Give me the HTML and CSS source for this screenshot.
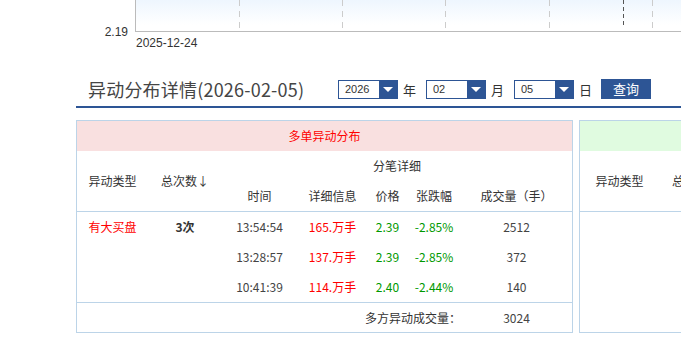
FILE: index.html
```html
<!DOCTYPE html>
<html lang="zh-CN">
<head>
<meta charset="utf-8">
<title>异动分布详情</title>
<link rel="stylesheet" href="styles.css">
</head>
<body>
<div class="page">
  <svg class="chart" width="681" height="50" viewBox="0 0 681 50" xmlns="http://www.w3.org/2000/svg">
    <defs>
      <linearGradient id="bg" x1="0" y1="0" x2="0" y2="1">
        <stop offset="0" stop-color="#eef6fe"/>
        <stop offset="0.8" stop-color="#ffffff"/>
      </linearGradient>
    </defs>
    <rect x="136" y="0" width="545" height="31" fill="url(#bg)"/>
    <g stroke="#cccccc" stroke-width="1" stroke-dasharray="6 5">
      <line x1="239.5" y1="0" x2="239.5" y2="30"/>
      <line x1="342.5" y1="0" x2="342.5" y2="30"/>
      <line x1="445.5" y1="0" x2="445.5" y2="30"/>
      <line x1="549.5" y1="0" x2="549.5" y2="30"/>
      <line x1="652.5" y1="0" x2="652.5" y2="30"/>
    </g>
    <line x1="623.5" y1="0" x2="623.5" y2="28" stroke="#555" stroke-width="1" stroke-dasharray="4 3"/>
    <line x1="135.5" y1="0" x2="135.5" y2="32" stroke="#bbbbbb"/>
    <line x1="135" y1="31.5" x2="681" y2="31.5" stroke="#bbbbbb"/>
    <text x="128" y="36" text-anchor="end" class="axis-text">2.19</text>
    <text x="136" y="47" class="axis-text">2025-12-24</text>
  </svg>

  <div class="title-bar">
    <h2 class="title">异动分布详情(2026-02-05)</h2>
    <div class="sel"><span class="sel-val">2026</span><span class="sel-btn"><i class="tri"></i></span></div>
    <span class="lbl">年</span>
    <div class="sel"><span class="sel-val">02</span><span class="sel-btn"><i class="tri"></i></span></div>
    <span class="lbl">月</span>
    <div class="sel"><span class="sel-val">05</span><span class="sel-btn"><i class="tri"></i></span></div>
    <span class="lbl lbl-last">日</span>
    <button class="query">查询</button>
  </div>

  <div class="panels">
    <div class="panel">
      <div class="panel-head head-red">多单异动分布</div>
      <table class="grid">
        <colgroup>
          <col style="width:71px"><col style="width:74px"><col style="width:75px"><col style="width:71px"><col style="width:39px"><col style="width:54px"><col style="width:111px">
        </colgroup>
        <thead>
          <tr>
            <th rowspan="2" class="bb">异动类型</th>
            <th rowspan="2" class="bb">总次数↓</th>
            <th colspan="5" class="sub">分笔详细</th>
          </tr>
          <tr class="h2">
            <th class="bb">时间</th>
            <th class="bb">详细信息</th>
            <th class="bb">价格</th>
            <th class="bb">张跌幅</th>
            <th class="bb">成交量（手）</th>
          </tr>
        </thead>
        <tbody>
          <tr>
            <td class="red">有大买盘</td>
            <td class="cnt">3次</td>
            <td>13:54:54</td>
            <td class="red">165.万手</td>
            <td class="green">2.39</td>
            <td class="green">-2.85%</td>
            <td>2512</td>
          </tr>
          <tr>
            <td></td>
            <td></td>
            <td>13:28:57</td>
            <td class="red">137.万手</td>
            <td class="green">2.39</td>
            <td class="green">-2.85%</td>
            <td>372</td>
          </tr>
          <tr class="last">
            <td></td>
            <td></td>
            <td>10:41:39</td>
            <td class="red">114.万手</td>
            <td class="green">2.40</td>
            <td class="green">-2.44%</td>
            <td>140</td>
          </tr>
        </tbody>
        <tfoot>
          <tr>
            <td colspan="6" class="sum-label">多方异动成交量：</td>
            <td>3024</td>
          </tr>
        </tfoot>
      </table>
    </div>

    <div class="panel panel-2">
      <div class="panel-head head-green">空单异动分布</div>
      <table class="grid">
        <colgroup>
          <col style="width:79px"><col style="width:74px"><col style="width:75px"><col style="width:71px"><col style="width:39px"><col style="width:54px"><col style="width:103px">
        </colgroup>
        <thead>
          <tr>
            <th rowspan="2" class="bb">异动类型</th>
            <th rowspan="2" class="bb">总次数↓</th>
            <th colspan="5" class="sub">分笔详细</th>
          </tr>
          <tr class="h2">
            <th class="bb">时间</th>
            <th class="bb">详细信息</th>
            <th class="bb">价格</th>
            <th class="bb">张跌幅</th>
            <th class="bb">成交量（手）</th>
          </tr>
        </thead>
        <tbody></tbody>
      </table>
    </div>
  </div>
</div>
</body>
</html>
```

FILE: styles.css
```css
html, body {
  margin: 0;
  padding: 0;
  background: #ffffff;
}
body {
  width: 681px;
  height: 341px;
  overflow: hidden;
  font-family: "Noto Sans CJK SC", "Liberation Sans", sans-serif;
  color: #333;
}
.page {
  width: 681px;
}
.chart {
  display: block;
}
.axis-text {
  font-family: "Liberation Sans", Arial, sans-serif;
  font-size: 12px;
  fill: #333;
}

/* Title bar */
.title-bar {
  margin: 22px 0 0 76px;
  height: 34px;
  border-bottom: 2px solid #2d5595;
  display: flex;
  align-items: center;
  padding-left: 12px;
  width: 700px;
  box-sizing: content-box;
}
.title {
  margin: 0;
  width: 250px;
  flex: none;
  font-size: 18px;
  font-weight: normal;
  line-height: 20px;
  color: #454545;
  white-space: nowrap;
  letter-spacing: 0.2px;
}
.sel {
  flex: none;
  width: 60px;
  height: 19px;
  box-sizing: border-box;
  border: 1px solid #2d5595;
  display: flex;
  background: #fff;
}
.sel-val {
  flex: 1;
  padding-left: 6px;
  font-family: "Liberation Sans", Arial, sans-serif;
  font-size: 11px;
  line-height: 17px;
  color: #333;
}
.sel-btn {
  width: 18px;
  background: #2d5595;
  display: flex;
  align-items: center;
  justify-content: center;
}
.tri {
  width: 0;
  height: 0;
  border-left: 5px solid transparent;
  border-right: 5px solid transparent;
  border-top: 5px solid #fff;
}
.lbl {
  flex: none;
  width: 12px;
  margin: 0 11px 0 5px;
  font-size: 13px;
  line-height: 19px;
  color: #333;
  white-space: nowrap;
}
.lbl-last {
  margin-right: 10px;
}
.query {
  flex: none;
  width: 50px;
  height: 20px;
  padding: 0;
  border: none;
  background: #2d5595;
  color: #fff;
  font-family: "Noto Sans CJK SC", sans-serif;
  font-size: 13px;
  line-height: 20px;
  cursor: pointer;
}

/* Panels */
.panels {
  display: flex;
  margin: 12px 0 0 76px;
  gap: 6px;
  width: 1100px;
}
.panel {
  flex: none;
  width: 497px;
  box-sizing: border-box;
  border: 1px solid #bcd4e8;
  display: flex;
  flex-direction: column;
}
.panel-head {
  height: 30px;
  line-height: 30px;
  text-align: center;
  font-size: 12px;
}
.head-red {
  background: #f9e0e0;
  color: #ff0000;
}
.head-green {
  background: #e0fbe0;
  color: #008800;
}
.grid {
  width: 100%;
  table-layout: fixed;
  border-collapse: separate;
  border-spacing: 0;
  font-size: 12px;
}
.grid th,
.grid td {
  padding: 0;
  height: 30px;
  text-align: center;
  vertical-align: middle;
  white-space: nowrap;
  font-weight: normal;
  line-height: 16px;
}
.grid th {
  color: #333;
}
.grid td {
  color: #444;
}
.grid th.bb {
  border-bottom: 1px solid #bcd4e8;
}
.grid th.sub {
  height: 30px;
}
.grid tr.h2 th {
  height: 30px;
}
.grid tbody tr.last td {
  border-bottom: 1px solid #bcd4e8;
}
.grid tfoot td {
  height: 29px;
}
.grid td.red {
  color: #ff0000;
}
.grid td.green {
  color: #009900;
}
.grid td.cnt {
  font-weight: bold;
  color: #333;
}
.grid td.sum-label {
  text-align: right;
  color: #333;
}
```
